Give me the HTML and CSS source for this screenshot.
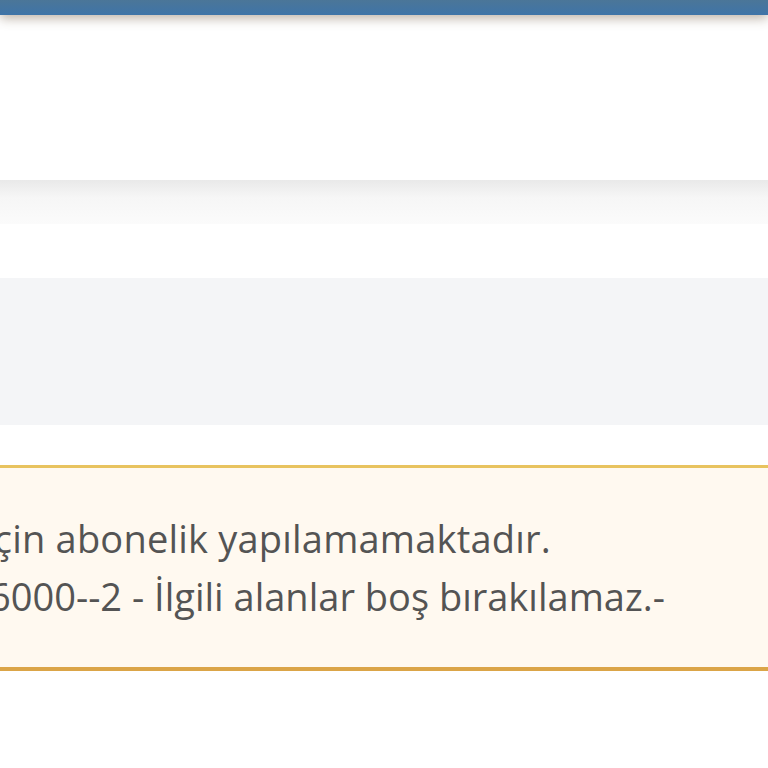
FILE: index.html
```
<!DOCTYPE html>
<html lang="tr">
<head>
    <meta charset="UTF-8">
    <meta name="viewport" content="width=device-width, initial-scale=1.0">
    <title>Abonelik</title>
    <link rel="stylesheet" href="styles.css">
</head>
<body>
    <div class="topbar"></div>

    <div class="page-head"></div>

    <div class="section-shadow"></div>

    <div class="spacer"></div>

    <div class="panel"></div>

    <div class="spacer small"></div>

    <!-- Uyarı kutusu -->
    <div class="alert">
        <p class="line first">için abonelik yapılamamaktadır.</p>
        <p class="line second">6000--2 - İlgili alanlar boş bırakılamaz.-</p>
    </div>
</body>
</html>
```

FILE: styles.css
```
body {
    margin: 0;
    font-family: "Open Sans", Arial, sans-serif;
    background-color: #fff;
    overflow: hidden;
}

.topbar {
    height: 15px;
    background: linear-gradient(#4b7698, #3f74a8);
    box-shadow: 0 3px 12px rgba(100, 75, 50, 0.45);
    position: relative;
}

.page-head {
    height: 165px;
}

.section-shadow {
    height: 44px;
    background: linear-gradient(#e9e9e9, #f6f6f6 40%, #fbfbfb);
}

.spacer {
    height: 54px;
}

.spacer.small {
    height: 40px;
}

.panel {
    height: 147px;
    background-color: #f4f5f7;
}

.alert {
    height: 206px;
    padding-top: 41px;
    box-sizing: border-box;
    background-color: #fff9f0;
    border-top: 3px solid #e8c35f;
    border-bottom: 4px solid #dba548;
}

.line {
    margin: 0;
    font-size: 38px;
    line-height: 58px;
    color: #545454;
    white-space: nowrap;
}

.line.first {
    margin-left: -16px;
    letter-spacing: 0.2px;
}

.line.second {
    margin-left: -11px;
}
```
